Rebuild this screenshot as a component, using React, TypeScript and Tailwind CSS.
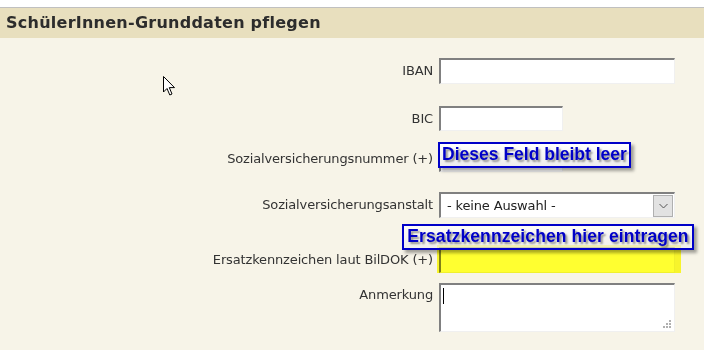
import React from 'react';

const Cursor = () => (
  <svg width="13" height="20" viewBox="0 0 13 20" className="absolute left-[163px] top-[76px]">
    <path d="M0.5 0.5 L0.5 16 L4 12.5 L6.8 19 L9 18 L6.3 11.6 L11.5 11.6 Z" fill="#fff" stroke="#000" strokeWidth="1" strokeLinejoin="miter" />
  </svg>
);

const inputCls =
  'h-full bg-white border-t-2 border-l-2 border-t-[#808080] border-l-[#808080] border-r border-b border-r-[#f0f0f0] border-b-[#f0f0f0]';

const Row = ({ label, top, height, children, align = 'center' }: { label: string; top: string; height: string; children: React.ReactNode; align?: string }) => (
  <div className={`flex ${top} ${height}`}>
    <div className={`w-[435px] pr-[2px] flex justify-end ${align === 'top' ? 'items-start pt-[2px]' : 'items-center'}`}>
      <span>{label}</span>
    </div>
    <div className="pl-[4px] flex-1 h-full">{children}</div>
  </div>
);

export default function App() {
  return (
    <div className="w-[704px] h-[350px] bg-white relative overflow-hidden font-['DejaVu_Sans',sans-serif]">
      <div className="h-[7px] bg-white" />
      <div className="h-[1px] bg-[#c0c0c0]" />
      <div className="h-[30px] bg-[#e8dfbe] flex items-center pl-[6px]">
        <h1 className="text-[16px] font-bold tracking-[0.25px] text-[#2c2c2c]">SchülerInnen-Grunddaten pflegen</h1>
      </div>
      <div className="bg-[#f7f4e8] h-[312px] text-[13px] tracking-[-0.15px] text-[#333] flex flex-col">
        <Row label="IBAN" top="mt-[20px]" height="h-[26px]">
          <div className={`${inputCls} w-[236px]`} />
        </Row>
        <Row label="BIC" top="mt-[22px]" height="h-[25px]">
          <div className={`${inputCls} w-[124px]`} />
        </Row>
        <Row label="Sozialversicherungsnummer (+)" top="mt-[15px]" height="h-[26px]">
          <div className={`${inputCls} w-[124px]`} />
        </Row>
        <Row label="Sozialversicherungsanstalt" top="mt-[20px]" height="h-[26px]">
          <div className={`${inputCls} w-[236px] flex items-center justify-between pl-[6px] pr-[1px]`}>
            <span className="text-[#222]">- keine Auswahl -</span>
            <div className="w-[20px] h-[22px] bg-[#e2e2e2] border border-[#b0b0b0] flex items-center justify-center">
              <svg width="9" height="6" viewBox="0 0 9 6">
                <path d="M0.5 1 L4.5 5 L8.5 1" fill="none" stroke="#555" strokeWidth="1" />
              </svg>
            </div>
          </div>
        </Row>
        <Row label="Ersatzkennzeichen laut BilDOK (+)" top="mt-[29px]" height="h-[26px]">
          <div className={`${inputCls} w-[236px]`} />
        </Row>
        <Row label="Anmerkung" top="mt-[10px]" height="h-[49px]" align="top">
          <div className={`${inputCls} w-[236px] relative`}>
            <div className="absolute left-[2px] top-[3px] w-[1px] h-[16px] bg-black" />
            <svg width="8" height="8" viewBox="0 0 8 8" className="absolute right-[3px] bottom-[3px]">
              <rect x="6" y="0" width="2" height="2" fill="#b0b0b0" />
              <rect x="3" y="3" width="2" height="2" fill="#b0b0b0" />
              <rect x="6" y="3" width="2" height="2" fill="#b0b0b0" />
              <rect x="0" y="6" width="2" height="2" fill="#b0b0b0" />
              <rect x="3" y="6" width="2" height="2" fill="#b0b0b0" />
              <rect x="6" y="6" width="2" height="2" fill="#b0b0b0" />
            </svg>
          </div>
        </Row>
      </div>

      {/* yellow highlight */}
      <div className="absolute left-[437px] top-[245px] w-[244px] h-[28px] bg-[#ffff30] mix-blend-multiply blur-[0.6px]" />

      {/* annotation boxes */}
      <div className="absolute left-[438px] top-[142px] w-[193px] h-[26px] border-2 border-[#0000c8] bg-gradient-to-b from-white to-[#ececec] shadow-[3px_3px_3px_rgba(0,0,0,0.35)] flex items-center justify-center">
        <span className="font-['Liberation_Sans',sans-serif] font-bold text-[17.5px] text-[#0000c8] [text-shadow:2px_2px_2px_rgba(0,0,0,0.4)] leading-none">Dieses Feld bleibt leer</span>
      </div>
      <div className="absolute left-[402px] top-[224px] w-[292px] h-[26px] border-2 border-[#0000c8] bg-gradient-to-b from-white/70 to-[#ececec]/70 shadow-[3px_3px_3px_rgba(0,0,0,0.35)] flex items-center justify-center">
        <span className="font-['Liberation_Sans',sans-serif] font-bold text-[17.5px] tracking-[0.1px] text-[#0000c8] [text-shadow:2px_2px_2px_rgba(0,0,0,0.4)] leading-none">Ersatzkennzeichen hier eintragen</span>
      </div>

      <Cursor />
    </div>
  );
}
